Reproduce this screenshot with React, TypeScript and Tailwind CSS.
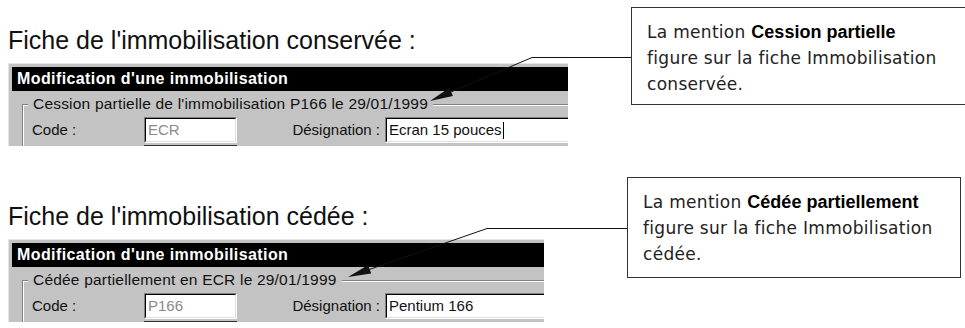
import React from 'react';

// Rough Windows 98 dialog crop + callout with an arrow
const SANS = "font-['Liberation_Sans',Arial,sans-serif]";

interface Fiche {
    heading: string;
    legend: string;
    code: string;
    designation: string;
    caret: boolean;
    windowWidth: string;
    leftWidth: string;
    note: { before: string; bold: string; after: string; last: string };
    boxClass: string;
    arrow: { bendX: number; bendY: number; tipX: number; tipY: number; endX: number };
}

const fiches: Fiche[] = [
    {
        heading: "Fiche de l'immobilisation conservée :",
        legend: "Cession partielle de l'immobilisation P166 le 29/01/1999",
        code: 'ECR',
        designation: 'Ecran 15 pouces',
        caret: true,
        windowWidth: 'w-[560px]',
        leftWidth: 'w-[631px]',
        note: { before: 'La mention ', bold: 'Cession partielle', after: 'figure sur la fiche Immobilisation', last: 'conservée.' },
        boxClass: 'mt-[7px] h-[98px] w-[340px] border border-[#333]',
        arrow: { bendX: 532, bendY: 57, tipX: 430, tipY: 101, endX: 631 },
    },
    {
        heading: "Fiche de l'immobilisation cédée :",
        legend: 'Cédée partiellement en ECR le 29/01/1999',
        code: 'P166',
        designation: 'Pentium 166',
        caret: false,
        windowWidth: 'w-[536px]',
        leftWidth: 'w-[627px]',
        note: { before: 'La mention ', bold: 'Cédée partiellement', after: 'figure sur la fiche Immobilisation', last: 'cédée.' },
        boxClass: 'mt-[1px] h-[101px] w-[334px] border border-[#333]',
        arrow: { bendX: 487, bendY: 52, tipX: 348, tipY: 101, endX: 627 },
    },
];

const Field = ({ children, className }: { children: React.ReactNode; className: string }) => (
    <div className={`h-[26px] border border-t-[#808080] border-l-[#808080] border-b-white border-r-white ${className}`}>
        <div className="h-full border border-t-black border-l-black border-b-[#dfdfdf] border-r-[#dfdfdf] bg-white pl-[2px] text-[15px] leading-[22px] flex items-center">
            {children}
        </div>
    </div>
);

const Arrow = ({ bendX, bendY, tipX, tipY, endX }: Fiche['arrow']) => {
    const dx = bendX - tipX;
    const dy = bendY - tipY;
    const len = Math.hypot(dx, dy);
    const ux = dx / len;
    const uy = dy / len;
    const bx = tipX + ux * 23;
    const by = tipY + uy * 23;
    const px = -uy * 4.5;
    const py = ux * 4.5;
    return (
        <svg className="absolute left-0 top-0 pointer-events-none" width={965} height={176}>
            <line x1={endX} y1={bendY + 0.5} x2={bendX} y2={bendY + 0.5} stroke="#111" strokeWidth={1} />
            <line x1={bendX} y1={bendY + 0.5} x2={bx} y2={by} stroke="#111" strokeWidth={1} />
            <polygon points={`${tipX},${tipY} ${bx + px},${by + py} ${bx - px},${by - py}`} fill="#111" />
        </svg>
    );
};

const Section = ({ fiche }: { fiche: Fiche }) => (
    <div className="relative flex h-[176px]">
        <div className={`flex-none pl-[8px] ${fiche.leftWidth}`}>
            <h2 className={`${SANS} mt-[25px] h-[30px] text-[25px] leading-[30px] text-[#111]`}>{fiche.heading}</h2>
            <div className={`${SANS} mt-[8px] h-[83px] overflow-hidden border-t border-l border-[#e4e4e4] bg-[#c3c3c3] pt-[3px] pl-[3px] ${fiche.windowWidth}`}>
                <div className="h-[24px] bg-black pl-[5px] text-[16px] font-bold leading-[24px] tracking-[0.4px] text-white whitespace-nowrap">
                    Modification d'une immobilisation
                </div>
                <fieldset className="ml-[10px] mt-[4px] w-[720px] border-t border-l border-[#808080] pl-[9px] pt-[4px] shadow-[inset_1px_1px_0_#fff]">
                    <legend className="ml-[-4px] bg-[#c3c3c3] px-[5px] text-[15.5px] leading-[18px] tracking-[0.2px] text-[#111] whitespace-nowrap">
                        {fiche.legend}
                    </legend>
                    <div className="flex flex-col gap-[2px]">
                        <div className="flex items-center text-[15px] text-[#111]">
                            <span className="w-[112px] flex-none">Code :</span>
                            <Field className="w-[93px] flex-none">
                                <span className="text-[#8a8a8a]">{fiche.code}</span>
                            </Field>
                            <span className="w-[148px] flex-none pr-[5px] text-right">Désignation :</span>
                            <Field className="flex-1">
                                <span>{fiche.designation}</span>
                                {fiche.caret && <span className="ml-[1px] h-[17px] w-px bg-black" />}
                            </Field>
                        </div>
                        <div className="flex">
                            <div className="ml-[112px] h-[26px] w-[93px] border-t-2 border-t-[#333]" />
                        </div>
                    </div>
                </fieldset>
            </div>
        </div>
        <div className={`flex-none bg-white pl-[15px] pt-[11px] ${fiche.boxClass}`}>
            <div className="font-['DejaVu_Sans',sans-serif] text-[17px] leading-[26px] tracking-[0.3px] text-[#222] whitespace-nowrap">
                <p>
                    {fiche.note.before}
                    <b className={`${SANS} text-[18px] font-bold tracking-normal text-black`}>{fiche.note.bold}</b>
                </p>
                <p>{fiche.note.after}</p>
                <p>{fiche.note.last}</p>
            </div>
        </div>
        <Arrow {...fiche.arrow} />
    </div>
);

export default function App() {
    return (
        <div className="relative h-[328px] w-[965px] overflow-hidden bg-white">
            {fiches.map((f) => (
                <Section key={f.heading} fiche={f} />
            ))}
        </div>
    );
}
